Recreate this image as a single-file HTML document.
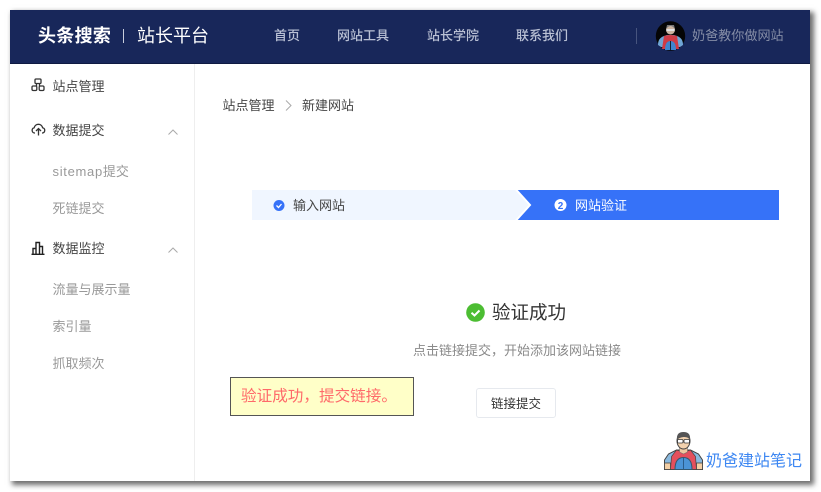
<!DOCTYPE html>
<html><head><meta charset="utf-8">
<style>
html,body{margin:0;padding:0;background:#fff}
body{width:821px;height:492px;overflow:hidden;position:relative;font-family:"Liberation Sans","Noto Sans CJK SC",sans-serif}
.t{position:absolute;white-space:nowrap;line-height:20px}
#frame{position:absolute;left:10px;top:10px;width:800px;height:471px;background:#fff;box-shadow:3px 3px 5px 1px #6e6e6e}
#hd{position:absolute;left:10px;top:10px;width:800px;height:53px;background:#18275a;border-bottom:1px solid #0f1a42}
.nav{font-size:13px;color:#b9c0d4;font-weight:500;top:26px}
.side{font-size:13px;color:#444;}
.sub{font-size:13px;color:#999;}
svg{position:absolute;overflow:visible}
</style></head><body>
<div id="frame"></div>
<div id="hd"></div>
<div class="t" style="left:38px;top:26px;font-size:18px;font-weight:700;color:#fff;letter-spacing:.3px">头条搜索</div>
<div style="position:absolute;left:123px;top:29px;width:1px;height:14px;background:#c8cddc"></div>
<div class="t" style="left:137px;top:26px;font-size:18px;color:#fff">站长平台</div>
<div class="t nav" style="left:274px">首页</div>
<div class="t nav" style="left:337px">网站工具</div>
<div class="t nav" style="left:427px">站长学院</div>
<div class="t nav" style="left:516px">联系我们</div>
<div style="position:absolute;left:636px;top:28px;width:1px;height:16px;background:#47547e"></div>
<svg style="left:656px;top:21px" width="29" height="30" viewBox="0 0 29 30">
<circle cx="14.500" cy="15" r="14.700" fill="#050505"/>
<circle cx="14.500" cy="9" r="4.500" fill="#c9b3a0"/><path d="M10 8q4.500-6 9 0l-1-4h-7z" fill="#777"/>
<rect x="10.500" y="8" width="8" height="2" fill="#e2e2e2"/>
<path d="M2 24q0-7 6-9l3-1h7l3 1q6 2 6 9l-3 2H5z" fill="#6fa5d5"/>
<path d="M8 15q6-2 13 0l2 13H6z" fill="#cf3b45"/>
<path d="M9 29q0-9 5.500-9t5.500 9z" fill="#3e86d0"/><path d="M14 20h1v9h-1z" fill="#123"/>
</svg>
<div class="t" style="left:692px;top:26px;font-size:13.100px;color:#858da6">奶爸教你做网站</div>

<div style="position:absolute;left:194px;top:64px;width:1px;height:417px;background:#eee"></div>

<svg style="left:31px;top:78px" width="14" height="14" viewBox="0 0 14 14" fill="none" stroke="#333" stroke-width="1.300">
<rect x="4" y="1" width="6" height="4.500" rx="1"/><rect x="1" y="8" width="4.800" height="4.500" rx="1.200"/><rect x="8.200" y="8" width="4.800" height="4.500" rx="1.200"/><path d="M5.500 5.500V8M8.500 5.500V8"/>
</svg>
<div class="t side" style="left:52.500px;top:77px">站点管理</div>
<svg style="left:31px;top:123px" width="15" height="13" viewBox="0 0 15 13" fill="none" stroke="#333" stroke-width="1.300">
<path d="M4 10H3.500a2.700 2.700 0 0 1-.3-5.300 4.300 4.300 0 0 1 8.400 0A2.700 2.700 0 0 1 11.500 10H11"/><path d="M7.500 12.500V6M5 8l2.500-2.500L10 8"/>
</svg>
<div class="t side" style="left:52.500px;top:121px">数据提交</div>
<svg style="left:168px;top:129px" width="10" height="6" fill="none" stroke="#aaa"><path d="M.5 5.500L5 1l4.500 4.500"/></svg>
<div class="t sub" style="left:52.500px;top:162px"><span style="letter-spacing:.7px">sitemap</span>提交</div>
<div class="t sub" style="left:52.500px;top:199px">死链提交</div>
<svg style="left:31px;top:241px" width="14" height="14" viewBox="0 0 14 14" fill="none" stroke="#222" stroke-width="1.400">
<path d="M.5 13.300h13M2 13V7.500h3V13M5 13V1.500h3.500V13M8.500 13V5.500h3V13"/>
</svg>
<div class="t side" style="left:52.500px;top:239px">数据监控</div>
<svg style="left:168px;top:247px" width="10" height="6" fill="none" stroke="#aaa"><path d="M.5 5.500L5 1l4.500 4.500"/></svg>
<div class="t sub" style="left:52.500px;top:280px">流量与展示量</div>
<div class="t sub" style="left:52.500px;top:317px">索引量</div>
<div class="t sub" style="left:52.500px;top:354px">抓取频次</div>

<div class="t" style="left:222.500px;top:96px;font-size:13px;color:#444">站点管理</div>
<svg style="left:285px;top:100px" width="7" height="11" fill="none" stroke="#aaa"><path d="M1 .5l5 5-5 5"/></svg>
<div class="t" style="left:302px;top:96px;font-size:13px;color:#444">新建网站</div>

<svg style="left:252px;top:190px" width="527" height="30">
<rect width="527" height="30" fill="#f0f6ff"/>
<path d="M265 0h262v30H265l13-15z" fill="#3672f8"/>
<path d="M264 -0.500l14 15.500-14 15.500" fill="none" stroke="#fff" stroke-width="2"/>
<circle cx="27" cy="15.500" r="5.500" fill="#3672f8"/>
<path d="M24.500 15.500l2 2 3-3.500" fill="none" stroke="#fff" stroke-width="1.300"/>
<circle cx="308.500" cy="15" r="6" fill="#fff"/>
<text x="308.500" y="19" font-size="10" font-weight="700" text-anchor="middle" fill="#3672f8" font-family="Liberation Sans">2</text>
</svg>
<div class="t" style="left:293px;top:196px;font-size:13px;color:#444">输入网站</div>
<div class="t" style="left:575px;top:196px;font-size:13px;color:#fff">网站验证</div>

<svg style="left:466px;top:303px" width="19" height="19" viewBox="0 0 19 19">
<circle cx="9.500" cy="9.500" r="9.300" fill="#4cbd32"/>
<path d="M5.500 9.800l3 2.700 5-5" fill="none" stroke="#fff" stroke-width="2"/>
</svg>
<div class="t" style="left:492px;top:303px;font-size:18.500px;color:#333">验证成功</div>
<div class="t" style="left:413px;top:341px;font-size:13px;color:#8a8a8a">点击链接提交，开始添加该网站链接</div>

<div style="position:absolute;left:230px;top:377px;width:182px;height:37px;background:#ffffc8;border:1px solid #555"></div>
<div class="t" style="left:241px;top:387px;font-size:15.600px;color:#ff6a6a">验证成功，提交链接。</div>

<div style="position:absolute;left:476px;top:388px;width:78px;height:28px;background:#fff;border:1px solid #e6e9ee;border-radius:3px"></div>
<div class="t" style="left:491px;top:394px;font-size:12.500px;color:#333">链接提交</div>

<svg style="left:664px;top:432px" width="39" height="38" viewBox="0 0 39 38">
<path d="M.5 37.500V28l4-6 8-4h14l8 4 4 6v9.500z" fill="#8ab9de" stroke="#444" stroke-width="1"/>
<path d="M6.500 37.500l1-13 5-6.500 7 2 7-2 5 6.500 1 13z" fill="#e4505d" stroke="#444" stroke-width=".700"/>
<path d="M11 37.500q0-12 8.500-12t8.500 12z" fill="#4b94d6" stroke="#33586e" stroke-width="1"/>
<path d="M19.500 26v11.500" stroke="#2b5d8a" fill="none"/>
<rect x=".5" y="31" width="6" height="6.500" fill="#f3cfa6" stroke="#444" stroke-width=".800"/>
<rect x="32.500" y="31" width="6" height="6.500" fill="#f3cfa6" stroke="#444" stroke-width=".800"/>
<path d="M15.500 14h8v6l-4 2-4-2z" fill="#f0c8a0" stroke="#666" stroke-width=".500"/>
<ellipse cx="19.500" cy="9" rx="6.500" ry="8" fill="#f3d2ae" stroke="#444"/>
<path d="M13 8q-1-8 6.500-8T26 8q-2-3.500-6.500-3T13 8z" fill="#555"/>
<rect x="13.500" y="7.500" width="5.500" height="3.500" rx="1" fill="#fff" stroke="#333" stroke-width=".800"/>
<rect x="20" y="7.500" width="5.500" height="3.500" rx="1" fill="#fff" stroke="#333" stroke-width=".800"/>
</svg>
<div class="t" style="left:706px;top:452px;font-size:16px;color:#3d87f2">奶爸建站笔记</div>
</body></html>
